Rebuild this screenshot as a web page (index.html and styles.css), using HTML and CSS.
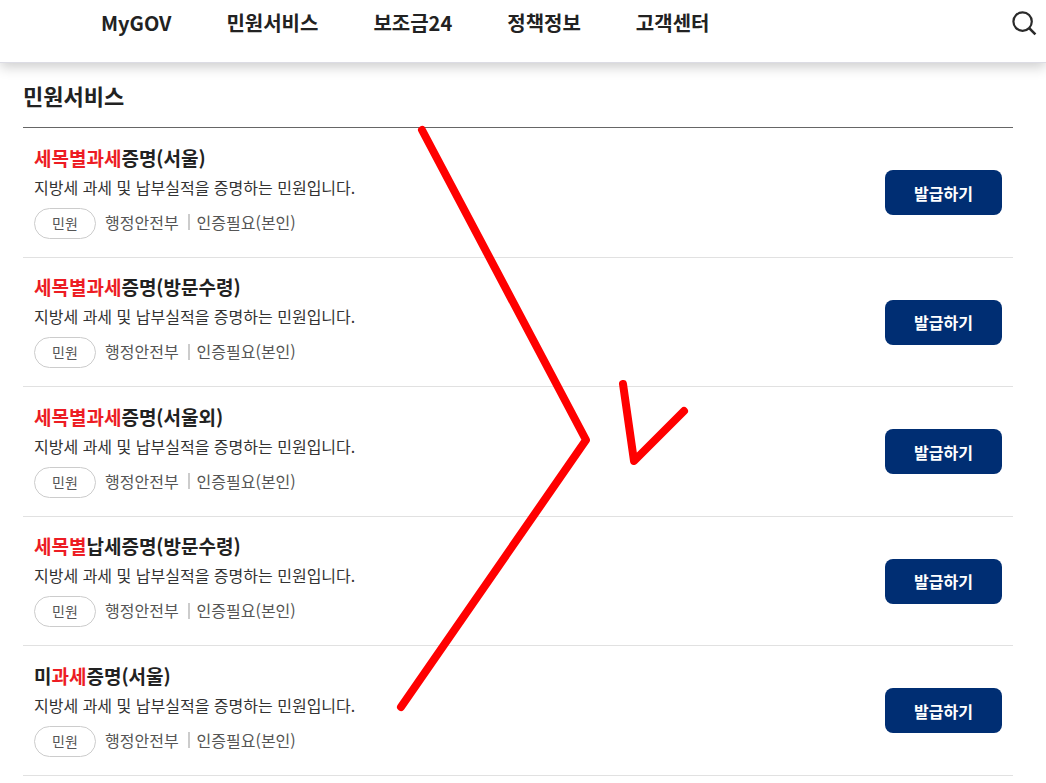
FILE: index.html
```html
<!DOCTYPE html>
<html lang="ko">
<head>
<meta charset="utf-8">
<meta name="viewport" content="width=device-width, initial-scale=1">
<title>민원서비스</title>
<link rel="stylesheet" href="styles.css">
</head>
<body>
<header class="header">
  <nav class="nav">
    <a href="#">MyGOV</a>
    <a href="#">민원서비스</a>
    <a href="#">보조금24</a>
    <a href="#">정책정보</a>
    <a href="#">고객센터</a>
  </nav>
  <button class="search" type="button" aria-label="검색">
    <svg width="26" height="26" viewBox="0 0 26 26" fill="none" stroke="#2a2a2a" stroke-width="2.2" aria-hidden="true"><circle cx="11.6" cy="11.6" r="9.2"/><path d="M18.2 18.2L24.4 24.4" stroke-width="2.6"/></svg>
  </button>
</header>
<main class="main">
  <h1 class="heading">민원서비스</h1>
  <ul class="list">
    <li class="item">
      <div class="info">
        <h2 class="title"><mark>세목별과세</mark>증명(서울)</h2>
        <p class="desc">지방세 과세 및 납부실적을 증명하는 민원입니다.</p>
        <div class="meta"><span class="badge">민원</span><span class="agency">행정안전부</span><span class="auth">인증필요(본인)</span></div>
      </div>
      <button class="issue" type="button">발급하기</button>
    </li>
    <li class="item">
      <div class="info">
        <h2 class="title"><mark>세목별과세</mark>증명(방문수령)</h2>
        <p class="desc">지방세 과세 및 납부실적을 증명하는 민원입니다.</p>
        <div class="meta"><span class="badge">민원</span><span class="agency">행정안전부</span><span class="auth">인증필요(본인)</span></div>
      </div>
      <button class="issue" type="button">발급하기</button>
    </li>
    <li class="item">
      <div class="info">
        <h2 class="title"><mark>세목별과세</mark>증명(서울외)</h2>
        <p class="desc">지방세 과세 및 납부실적을 증명하는 민원입니다.</p>
        <div class="meta"><span class="badge">민원</span><span class="agency">행정안전부</span><span class="auth">인증필요(본인)</span></div>
      </div>
      <button class="issue" type="button">발급하기</button>
    </li>
    <li class="item">
      <div class="info">
        <h2 class="title"><mark>세목별</mark>납세증명(방문수령)</h2>
        <p class="desc">지방세 과세 및 납부실적을 증명하는 민원입니다.</p>
        <div class="meta"><span class="badge">민원</span><span class="agency">행정안전부</span><span class="auth">인증필요(본인)</span></div>
      </div>
      <button class="issue" type="button">발급하기</button>
    </li>
    <li class="item">
      <div class="info">
        <h2 class="title">미<mark>과세</mark>증명(서울)</h2>
        <p class="desc">지방세 과세 및 납부실적을 증명하는 민원입니다.</p>
        <div class="meta"><span class="badge">민원</span><span class="agency">행정안전부</span><span class="auth">인증필요(본인)</span></div>
      </div>
      <button class="issue" type="button">발급하기</button>
    </li>
  </ul>
</main>
<svg class="marks" width="300" height="594" viewBox="394 122 300 594" aria-hidden="true">
  <path d="M422 130L586 440L401 707M623 384L634 461L684 411"/>
</svg>
</body>
</html>
```
FILE: styles.css
```css
* {
  box-sizing: border-box;
}

body {
  position: relative;
  margin: 0;
  background: #fff;
  color: #222;
  font-family: "Noto Sans CJK KR", "Noto Sans", sans-serif;
  font-size: 16px;
}

.header {
  display: flex;
  align-items: flex-start;
  justify-content: space-between;
  padding: 8px 9px 24px 101px;
  border-bottom: 1px solid #dcdce4;
  box-shadow: 0 4px 12px rgba(0, 0, 0, 0.2);
}

.nav {
  display: flex;
  gap: 55px;
}

.nav a {
  color: #222;
  font-size: 20px;
  font-weight: 700;
  line-height: 30px;
  text-decoration: none;
  white-space: nowrap;
}

.search {
  display: flex;
  margin-top: 2px;
  padding: 0;
  border: 0;
  background: none;
}

.main {
  padding: 16px 33px 0 23px;
}

.heading {
  margin: 0;
  padding-bottom: 16px;
  border-bottom: 1px solid #666;
  font-size: 22px;
  font-weight: 700;
  line-height: 32px;
}

.list {
  margin: 0;
  padding: 0;
  list-style: none;
}

.item {
  display: flex;
  align-items: center;
  justify-content: space-between;
  min-height: 129px;
  padding: 0 11px;
  border-bottom: 1px solid #e1e1e1;
}

.item:nth-child(odd) {
  min-height: 130px;
}

.info {
  padding-bottom: 4px;
}

.title {
  margin: 0;
  font-size: 19px;
  font-weight: 700;
  line-height: 29px;
}

.title mark {
  background: none;
  color: #ed1c24;
}

.desc {
  margin: 0;
  color: #333;
  line-height: 30px;
}

.meta {
  display: flex;
  align-items: flex-start;
  margin-top: 6px;
  color: #555;
  line-height: 29px;
}

.badge {
  width: 62px;
  margin-right: 9px;
  border: 1px solid #ccc;
  border-radius: 16px;
  font-size: 14px;
  text-align: center;
}

.agency {
  display: flex;
  align-items: center;
}

.agency::after {
  width: 2px;
  height: 16px;
  margin: 0 7px 0 9px;
  background: #ccc;
  content: "";
}

.issue {
  width: 117px;
  height: 45px;
  padding: 0;
  border: 0;
  border-radius: 8px;
  background: #002e73;
  color: #fff;
  font: inherit;
  font-weight: 700;
}

.marks {
  position: absolute;
  top: 122px;
  left: 394px;
  fill: none;
  stroke: #f00;
  stroke-width: 8px;
  stroke-linecap: round;
  stroke-linejoin: round;
  pointer-events: none;
}
```
